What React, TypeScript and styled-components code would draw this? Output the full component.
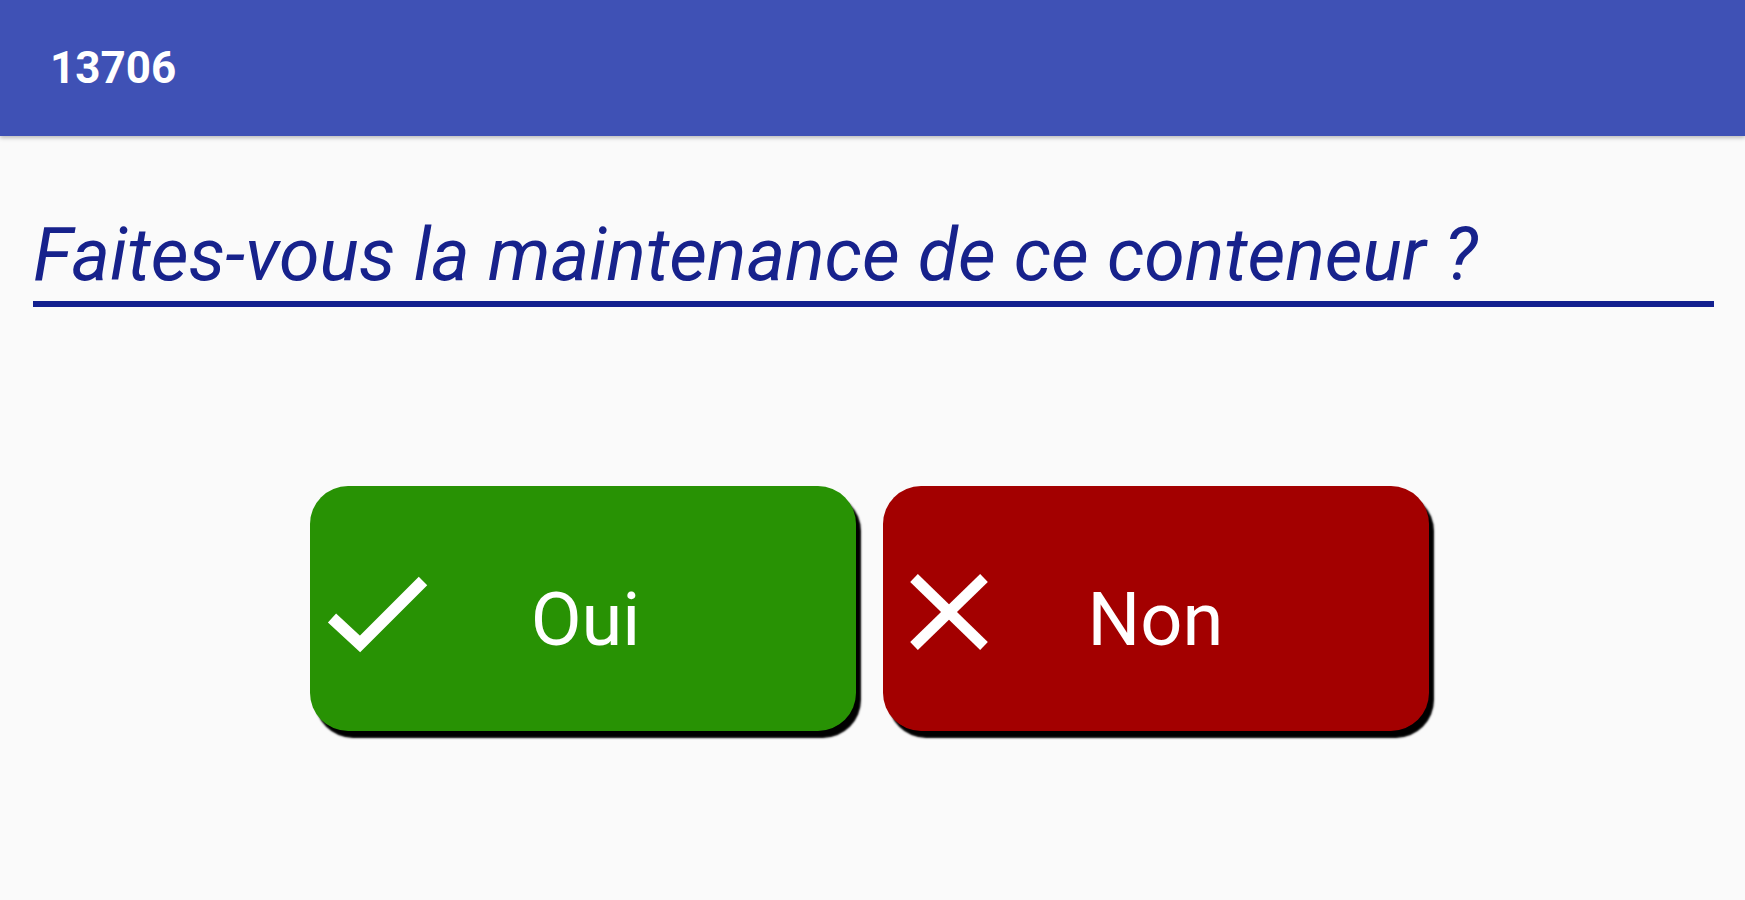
import styled, { createGlobalStyle } from 'styled-components';

const GlobalStyle = createGlobalStyle`
  html, body {
    margin: 0;
    padding: 0;
    background: #fafafa;
    font-family: Roboto, "Liberation Sans", sans-serif;
  }
`;

const Page = styled.div`
  min-height: 900px;
  background: #fafafa;
`;

const AppBar = styled.header`
  height: 136px;
  background: #3f51b5;
  display: flex;
  align-items: center;
  padding-left: 50px;
  color: #fff;
  font-size: 44px;
  font-weight: 700;
  box-shadow: 0 2px 4px rgba(0, 0, 0, 0.25);
`;

const Question = styled.h2`
  margin: 77px 31px 0 33px;
  padding-bottom: 4px;
  border-bottom: 6px solid #13208f;
  color: #17228c;
  font-size: 73.5px;
  line-height: 84px;
  font-style: italic;
  font-weight: 400;
`;

const Actions = styled.div`
  margin-top: 179px;
  display: flex;
  justify-content: center;
  gap: 27px;
  padding-right: 7px;
`;

const ActionButton = styled.button<{ $bg: string; $inset: number }>`
  width: 546px;
  height: 245px;
  border: none;
  border-radius: 38px;
  background: ${(p) => p.$bg};
  box-shadow: 5px 7px 2px #000;
  color: #fff;
  font-family: Roboto, "Liberation Sans", sans-serif;
  font-size: 74px;
  display: grid;
  grid-template-columns: 1fr auto 1fr;
  align-items: center;
  padding: 0 ${(p) => p.$inset}px;
  cursor: pointer;

  svg {
    justify-self: start;
    margin-top: 6px;
    overflow: visible;
  }
`;

const Label = styled.span<{ $shift: number }>`
  line-height: 1;
  padding-top: 22px;
  margin-left: ${(p) => p.$shift}px;
`;

const CheckIcon = () => (
  <svg width="100" height="80" viewBox="0 0 100 80">
    <polyline points="2,46 30,72 93,9" fill="none" stroke="#fff" strokeWidth="12" strokeLinejoin="miter" />
  </svg>
);

const CrossIcon = () => (
  <svg width="82" height="80" viewBox="0 0 82 80">
    <line x1="6" y1="6" x2="76" y2="74" stroke="#fff" strokeWidth="11" />
    <line x1="76" y1="6" x2="6" y2="74" stroke="#fff" strokeWidth="11" />
  </svg>
);

const App = () => {
  return (
    <Page>
      <GlobalStyle />
      <AppBar>13706</AppBar>
      <Question>Faites-vous la maintenance de ce conteneur ?</Question>
      <Actions>
        <ActionButton $bg="#289204" $inset={20}>
          <CheckIcon />
          <Label $shift={6}>Oui</Label>
        </ActionButton>
        <ActionButton $bg="#a30000" $inset={25}>
          <CrossIcon />
          <Label $shift={0}>Non</Label>
        </ActionButton>
      </Actions>
    </Page>
  );
};

export default App;
